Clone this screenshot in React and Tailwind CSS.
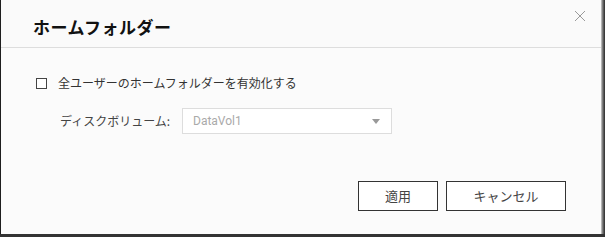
import React from 'react';

const font = { fontFamily: '"Noto Sans CJK JP", Roboto, "Noto Sans", sans-serif' };

function App() {
  return (
    <div className="w-[605px] h-[237px] flex flex-col bg-[#3a3a3a]" style={font}>
      <div className="flex-1 flex">
        {/* left edge */}
        <div className="w-px bg-[#1e1e1e]" />
        <div className="flex-1 flex flex-col bg-[#fbfbfb]">
          {/* header */}
          <div className="h-[48px] flex items-start justify-between border-b border-[#dddddd] bg-[#fafafa]">
            <h1 className="pl-[32px] pt-[14px] text-[17px] font-bold text-[#111] leading-[26px] tracking-[0.5px]">
              ホームフォルダー
            </h1>
            <button className="mt-[9px] mr-[14px] w-[14px] h-[14px] flex items-center justify-center">
              <svg width="12" height="12" viewBox="0 0 12 12">
                <path d="M1 1 L11 11 M11 1 L1 11" stroke="#9a9a9a" strokeWidth="1" fill="none" />
              </svg>
            </button>
          </div>

          {/* body */}
          <div className="flex-1 flex flex-col px-[35px] pt-[28px]">
            <label className="flex items-center gap-[11px] h-[14px]">
              <span className="w-[11px] h-[11px] border border-[#444] bg-white" />
              <span className="text-[12px] text-[#333] leading-none">全ユーザーのホームフォルダーを有効化する</span>
            </label>

            <div className="flex items-center mt-[18px] pl-[24px]">
              <span className="w-[122px] text-[12px] text-[#444]">ディスクボリューム:</span>
              <div className="w-[210px] h-[26px] border border-[#dddddd] bg-white flex items-center justify-between pl-[10px] pr-[11px]">
                <span className="text-[12px] text-[#aaaaaa]" style={{ fontFamily: 'Roboto, sans-serif' }}>DataVol1</span>
                <svg width="8" height="5" viewBox="0 0 8 5">
                  <path d="M0 0 L8 0 L4 5 Z" fill="#999" />
                </svg>
              </div>
            </div>

            <div className="flex justify-end gap-[8px] mt-[47px]">
              <button className="w-[80px] h-[30px] border border-[#333] bg-white text-[13px] text-[#444]">
                適用
              </button>
              <button className="w-[120px] h-[30px] border border-[#333] bg-white text-[13px] text-[#444]">
                キャンセル
              </button>
            </div>
          </div>
        </div>
        {/* right edge */}
        <div className="w-px bg-[#b5b5b5]" />
        <div className="w-px bg-[#808080]" />
        <div className="w-px bg-[#5a5a5a]" />
        <div className="w-px bg-[#3a3a3a]" />
      </div>
      {/* bottom edge */}
      <div className="h-[3px] bg-[#333]" />
    </div>
  );
}

export default App;
